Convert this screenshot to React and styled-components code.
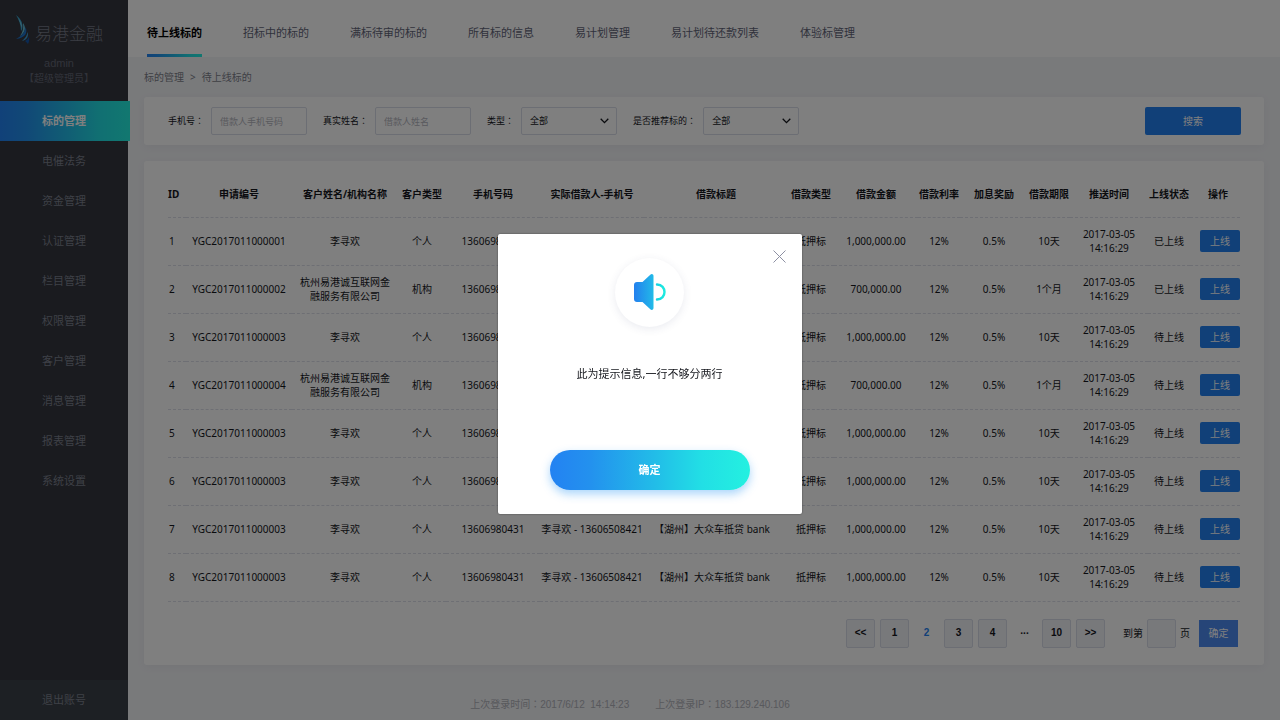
import React from "react"
import styled, { createGlobalStyle, css } from "styled-components"

const GlobalStyle = createGlobalStyle`
  * {
    box-sizing: border-box;
  }

  body {
    margin: 0;
    background: #f3f4f7;
    color: #14161c;
    font-family: "Noto Sans", "Noto Sans CJK SC", sans-serif;
    font-size: 10px;
    line-height: 14px;
  }

  button, input, select {
    font-family: inherit;
    font-size: inherit;
    line-height: inherit;
  }

  a {
    color: inherit;
    text-decoration: none;
  }
`

const brand = "linear-gradient(90deg, #2382f2 0%, #2391ee 20%, #22bce8 52%, #22dfe5 76%, #24f0e0 100%)"

const Page = styled.div`
  display: flex;
  min-height: 100vh;
`

const Sidebar = styled.aside`
  display: flex;
  flex-direction: column;
  flex: none;
  width: 128px;
  background: #34363e;
  color: #7d818e;
`

const Profile = styled.div`
  display: flex;
  flex-direction: column;
  align-items: center;
  width: 118px;
  height: 101px;
  padding-top: 14px;
`

const Logo = styled.a`
  display: flex;
  align-items: flex-start;
  gap: 5px;
  height: 32px;
  margin-bottom: 10px;
  color: #787c89;
  font-size: 17px;
  font-weight: 300;
  line-height: 40px;
  white-space: nowrap;
`

const UserName = styled.div`
  color: #636775;
  font-family: "Liberation Sans", sans-serif;
  font-size: 11px;
  line-height: 15px;
`

const Role = styled.div`
  color: #636775;
  line-height: 15px;
  white-space: nowrap;
`

const Menu = styled.nav`
  display: flex;
  flex-direction: column;
  flex: 1;
`

const MenuLink = styled.a`
  display: block;
  height: 40px;
  font-size: 11px;
  line-height: 40px;
  text-align: center;
  ${props => props.$active && css`
    z-index: 1;
    position: relative;
    width: 130px;
    padding-right: 2px;
    background: ${brand};
    color: #fff;
    font-weight: 700;
  `}
`

const Logout = styled.button`
  height: 40px;
  padding: 0;
  border: 0;
  background: #3a4048;
  color: #7d818e;
  font-size: 11px;
`

const Main = styled.div`
  display: flex;
  flex-direction: column;
  flex: 1;
  min-width: 0;
`

const Tabs = styled.nav`
  display: flex;
  gap: 41px;
  height: 57px;
  padding: 0 19px;
  background: #fff;
`

const Tab = styled.a`
  height: 57px;
  padding-top: 10px;
  border-bottom: 3px solid transparent;
  color: #626478;
  font-size: 11px;
  line-height: 46px;
  white-space: nowrap;
  ${props => props.$active && css`
    border-image: ${brand} 1;
    border-width: 0 0 3px;
    color: #000;
    font-weight: 700;
  `}
`

const Content = styled.main`
  flex: 1;
  padding: 0 16px;
`

const Breadcrumb = styled.div`
  display: flex;
  gap: 6px;
  height: 40px;
  color: #7d7f8a;
  line-height: 40px;
`

const Panel = styled.section`
  border-radius: 3px;
  background: #fff;
  box-shadow: 0 2px 8px rgba(60, 70, 110, 0.06);
`

const Filters = styled(Panel).attrs({ as: "form" })`
  display: flex;
  align-items: center;
  gap: 16px;
  height: 48px;
  margin-bottom: 16px;
  padding: 0 23px 0 24px;
  font-size: 9px;
`

const Field = styled.label`
  display: flex;
  align-items: center;
  gap: 7px;
  white-space: nowrap;
`

// the TC face centres the fullwidth colon in its box
const Colon = styled.span`
  font-family: "Noto Sans CJK TC", sans-serif;
`

const TextInput = styled.input`
  width: 96px;
  height: 28px;
  padding: 0 8px;
  border: 1px solid #d9dce8;
  border-radius: 2px;
  background: #fff;
  &::placeholder {
    color: #b3b4bd;
  }
`

const SelectBox = styled.span`
  display: grid;
  align-items: center;
  width: 96px;

  select, svg {
    grid-area: 1 / 1;
  }

  svg {
    justify-self: end;
    margin-right: 8px;
    pointer-events: none;
  }
`

const Select = styled.select`
  width: 100%;
  height: 28px;
  padding: 0 8px;
  border: 1px solid #d9dce8;
  border-radius: 2px;
  background: #fff;
  color: #14161c;
  appearance: none;
`

const Button = styled.button`
  padding: 0;
  border: 0;
  border-radius: 2px;
  background: #2381f0;
  color: #fff;
`

const SearchButton = styled(Button)`
  width: 96px;
  height: 28px;
  margin-left: auto;
  font-size: 10px;
`

const ListPanel = styled(Panel)`
  padding: 11px 24px 17px;
`

const Table = styled.table`
  width: 100%;
  border-collapse: collapse;
  table-layout: fixed;
`

const Th = styled.th`
  height: 45px;
  padding: 0;
  border-bottom: 1px dashed #dcdfe9;
  text-align: center;
  white-space: nowrap;
  &:first-child {
    text-align: left;
  }
  &:last-child {
    padding-left: 6px;
  }
`

const Td = styled.td`
  height: 48px;
  padding: 0;
  border-bottom: 1px dashed #dcdfe9;
  text-align: center;
  &:first-child {
    padding-left: 1px;
    text-align: left;
  }
  &:last-child {
    text-align: right;
  }
`

const TitleCell = styled(Td)`
  padding-right: 8px;
  white-space: nowrap;
`

const NameCell = styled(Td)`
  padding: 0 8px;
`

const RowButton = styled(Button)`
  width: 40px;
  height: 22px;
`

const Pager = styled.div`
  display: flex;
  align-items: center;
  justify-content: flex-end;
  gap: 5px;
  padding: 17px 2px 0 0;
`

const PageButton = styled.button`
  width: 29px;
  height: 29px;
  padding: 0;
  border: 1px solid #d9dce8;
  border-radius: 2px;
  background: #f0f2f7;
  color: #14161c;
  font-family: "Liberation Sans", sans-serif;
  font-weight: 700;
  ${props => props.$current && css`
    width: 25px;
    border-color: transparent;
    background: none;
    color: #2381f0;
  `}
`

const Ellipsis = styled.span`
  width: 25px;
  text-align: center;
  font-weight: 700;
`

const Jump = styled.form`
  display: flex;
  align-items: center;
  gap: 9px;
  margin-left: 13px;

  label {
    display: flex;
    align-items: center;
    gap: 4px;
  }
`

const PageInput = styled.input`
  width: 29px;
  height: 29px;
  padding: 0 4px;
  border: 1px solid #d9dce8;
  border-radius: 2px;
  background: #f0f2f7;
`

const JumpButton = styled(Button)`
  width: 39px;
  height: 27px;
  border-radius: 0;
  background: #4d8af0;
`

const Footer = styled.footer`
  display: flex;
  justify-content: center;
  gap: 26px;
  padding: 0 148px 8px 0;
  color: #b0b2ba;
  font-family: "Liberation Sans", "Noto Sans CJK SC", sans-serif;
  white-space: pre;
`

const Overlay = styled.div`
  z-index: 2;
  position: fixed;
  inset: 0;
  display: flex;
  align-items: center;
  justify-content: center;
  padding: 27px 0 0 19px;
  background: rgba(0, 0, 0, 0.5);
`

const Dialog = styled.div`
  display: flex;
  flex-direction: column;
  align-items: center;
  width: 304px;
  height: 280px;
  padding: 16px 16px 24px;
  border-radius: 2px;
  background: #fff;
  box-shadow: 0 0 2px rgba(0, 0, 0, 0.5);
`

const CloseButton = styled.button`
  align-self: flex-end;
  width: 13px;
  height: 13px;
  padding: 0;
  border: 0;
  background: none;

  svg {
    display: block;
  }
`

const IconCircle = styled.div`
  display: flex;
  align-items: center;
  justify-content: center;
  width: 69px;
  height: 69px;
  margin-top: -5px;
  border-radius: 50%;
  box-shadow: 0 2px 8px rgba(50, 60, 110, 0.1);
`

const Message = styled.p`
  flex: 1;
  margin: 39px 0 0;
  font-size: 11px;
  line-height: 16px;
`

const ConfirmButton = styled.button`
  width: 200px;
  height: 40px;
  border: 0;
  border-radius: 20px;
  background: ${brand};
  box-shadow: 0 4px 10px rgba(40, 150, 245, 0.4);
  color: #fff;
  font-size: 11px;
  font-weight: 700;
`

const menu = ["标的管理", "电催法务", "资金管理", "认证管理", "栏目管理", "权限管理", "客户管理", "消息管理", "报表管理", "系统设置"]

const tabs = ["待上线标的", "招标中的标的", "满标待审的标的", "所有标的信息", "易计划管理", "易计划待还款列表", "体验标管理"]

const columns = [
  ["ID", 18],
  ["申请编号", 106],
  ["客户姓名/机构名称", 106],
  ["客户类型", 48],
  ["手机号码", 94],
  ["实际借款人-手机号", 104],
  ["借款标题", 144],
  ["借款类型", 46],
  ["借款金额", 84],
  ["借款利率", 42],
  ["加息奖励", 68],
  ["借款期限", 42],
  ["推送时间", 78],
  ["上线状态", 42],
  ["操作", 50],
]

const person = { name: "李寻欢", type: "个人", amount: "1,000,000.00", term: "10天" }
const company = { name: "杭州易港诚互联网金融服务有限公司", type: "机构", amount: "700,000.00", term: "1个月" }

const rows = [
  { ...person, no: "YGC2017011000001", status: "已上线" },
  { ...company, no: "YGC2017011000002", status: "已上线" },
  { ...person, no: "YGC2017011000003", status: "待上线" },
  { ...company, no: "YGC2017011000004", status: "待上线" },
  { ...person, no: "YGC2017011000003", status: "待上线" },
  { ...person, no: "YGC2017011000003", status: "待上线" },
  { ...person, no: "YGC2017011000003", status: "待上线" },
  { ...person, no: "YGC2017011000003", status: "待上线" },
]

const LogoMark = () => (
  <svg width="15" height="32" viewBox="0 0 15 32" aria-hidden="true">
    <path d="M1 1 C5 4 7.500 8 7.500 12 C7.500 14 7 16 6 17 C6 11 4 6 1 1Z" fill="#3ba6cf" />
    <path d="M3 4 C6 8 7 11 6.500 14 C6 10 5 7 3 4Z" fill="#a6dce9" />
    <path d="M8 9 C11 13 11 18 5 22 C8 18 8.500 14 8 9Z" fill="#62bcd8" />
    <path d="M10.500 13 C13 19 10 24 1 25 C7 22 10 18 10.500 13Z" fill="#1d72c8" />
    <path d="M12.500 18 C14 22 12 26 7 27 C10 24 12 22 12.500 18Z" fill="#3d9bd5" />
    <path d="M14 23 C14.500 26 14 28 13 30 C12 29 11.500 28 10 27 C12 26 13 25 14 23Z" fill="#1455a8" />
  </svg>
)

const Chevron = () => (
  <svg width="9" height="6" viewBox="0 0 9 6" fill="none" stroke="#14161c" strokeWidth="1.3" aria-hidden="true">
    <path d="M0.700 0.800 L4.500 4.600 L8.300 0.800" />
  </svg>
)

const Speaker = () => (
  <svg width="32" height="36" viewBox="0 0 32 36" aria-hidden="true">
    <defs>
      <linearGradient id="speaker" gradientUnits="userSpaceOnUse" x1="0" y1="0" x2="32" y2="0">
        <stop offset="0" stopColor="#2380ee" />
        <stop offset="0.55" stopColor="#22b3e9" />
        <stop offset="0.75" stopColor="#15d9e0" />
        <stop offset="1" stopColor="#20eee0" />
      </linearGradient>
    </defs>
    <path
      d="M3 8 H8.500 L16.300 0.700 C17.600 -0.500 19.500 0.200 19.500 2 V34 C19.500 35.800 17.600 36.500 16.300 35.300 L8.500 28 H3 C1.200 28 0 26.800 0 25 V11 C0 9.200 1.200 8 3 8Z"
      fill="url(#speaker)"
    />
    <path d="M23 10.500 C33 10.500 33 25.500 23 25.500" fill="none" stroke="url(#speaker)" strokeWidth="2.400" strokeLinecap="round" />
  </svg>
)

const FieldName = ({ children }) => (
  <span>{children}<Colon>：</Colon></span>
)

const FilterSelect = ({ label }) => (
  <Field>
    <FieldName>{label}</FieldName>
    <SelectBox>
      <Select>
        <option>全部</option>
      </Select>
      <Chevron />
    </SelectBox>
  </Field>
)

const LoanTable = () => (
  <Table>
    <colgroup>
      {columns.map(([title, width]) => (
        <col key={title} width={width} />
      ))}
    </colgroup>
    <thead>
      <tr>
        {columns.map(([title]) => (
          <Th key={title} scope="col">{title}</Th>
        ))}
      </tr>
    </thead>
    <tbody>
      {rows.map((row, index) => (
        <tr key={index}>
          <Td>{index + 1}</Td>
          <Td>{row.no}</Td>
          <NameCell>{row.name}</NameCell>
          <Td>{row.type}</Td>
          <Td>13606980431</Td>
          <Td>李寻欢 - 13606508421</Td>
          <TitleCell>【湖州】大众车抵贷 bank</TitleCell>
          <Td>抵押标</Td>
          <Td>{row.amount}</Td>
          <Td>12%</Td>
          <Td>0.5%</Td>
          <Td>{row.term}</Td>
          <Td>2017-03-05<br />14:16:29</Td>
          <Td>{row.status}</Td>
          <Td><RowButton type="button">上线</RowButton></Td>
        </tr>
      ))}
    </tbody>
  </Table>
)

const App = () => (
  <>
    <GlobalStyle />
    <Page>
      <Sidebar>
        <Profile>
          <Logo href="#">
            <LogoMark />
            易港金融
          </Logo>
          <UserName>admin</UserName>
          <Role>【超级管理员】</Role>
        </Profile>
        <Menu>
          {menu.map((item, index) => (
            <MenuLink key={item} href="#" $active={index === 0}>{item}</MenuLink>
          ))}
        </Menu>
        <Logout type="button">退出账号</Logout>
      </Sidebar>
      <Main>
        <Tabs>
          {tabs.map((item, index) => (
            <Tab key={item} href="#" $active={index === 0}>{item}</Tab>
          ))}
        </Tabs>
        <Content>
          <Breadcrumb>
            <a href="#">标的管理</a>
            <span>&gt;</span>
            <span>待上线标的</span>
          </Breadcrumb>
          <Filters>
            <Field>
              <FieldName>手机号</FieldName>
              <TextInput type="tel" placeholder="借款人手机号码" />
            </Field>
            <Field>
              <FieldName>真实姓名</FieldName>
              <TextInput type="text" placeholder="借款人姓名" />
            </Field>
            <FilterSelect label="类型" />
            <FilterSelect label="是否推荐标的" />
            <SearchButton type="button">搜索</SearchButton>
          </Filters>
          <ListPanel>
            <LoanTable />
            <Pager>
              <PageButton type="button">&lt;&lt;</PageButton>
              <PageButton type="button">1</PageButton>
              <PageButton type="button" $current>2</PageButton>
              <PageButton type="button">3</PageButton>
              <PageButton type="button">4</PageButton>
              <Ellipsis>···</Ellipsis>
              <PageButton type="button">10</PageButton>
              <PageButton type="button">&gt;&gt;</PageButton>
              <Jump>
                <label>
                  到第
                  <PageInput type="text" />
                  页
                </label>
                <JumpButton type="button">确定</JumpButton>
              </Jump>
            </Pager>
          </ListPanel>
        </Content>
        <Footer>
          <span>上次登录时间<Colon>：</Colon>2017/6/12  14:14:23</span>
          <span>上次登录IP<Colon>：</Colon>183.129.240.106</span>
        </Footer>
      </Main>
    </Page>
    <Overlay>
      <Dialog role="dialog" aria-modal="true" aria-labelledby="message">
        <CloseButton type="button" aria-label="关闭">
          <svg width="13" height="13" viewBox="0 0 13 13" stroke="#8d90a3" strokeWidth="1">
            <path d="M0.500 0.500 L12.500 12.500 M12.500 0.500 L0.500 12.500" />
          </svg>
        </CloseButton>
        <IconCircle>
          <Speaker />
        </IconCircle>
        <Message id="message">此为提示信息,一行不够分两行</Message>
        <ConfirmButton type="button">确定</ConfirmButton>
      </Dialog>
    </Overlay>
  </>
)

export default App
